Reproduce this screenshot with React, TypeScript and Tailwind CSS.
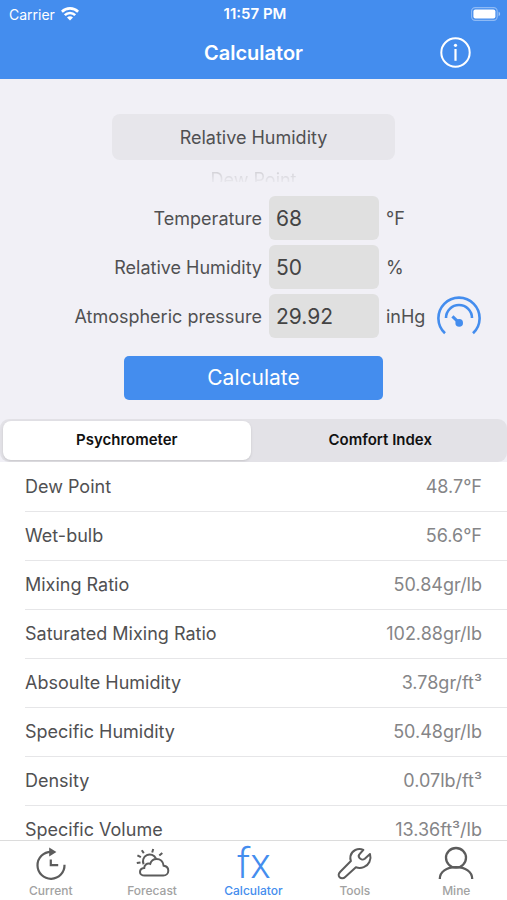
import React, { useState } from 'react';

type ResultTab = 'psychrometer' | 'comfort';

const RESULTS: { name: string; value: string }[] = [
  { name: 'Dew Point', value: '48.7°F' },
  { name: 'Wet-bulb', value: '56.6°F' },
  { name: 'Mixing Ratio', value: '50.84gr/lb' },
  { name: 'Saturated Mixing Ratio', value: '102.88gr/lb' },
  { name: 'Absoulte Humidity', value: '3.78gr/ft³' },
  { name: 'Specific Humidity', value: '50.48gr/lb' },
  { name: 'Density', value: '0.07lb/ft³' },
  { name: 'Specific Volume', value: '13.36ft³/lb' },
];

const WifiIcon = () => (
  <svg className="w-[18px] h-[14px]" viewBox="0 0 18 14" fill="none" stroke="white" strokeWidth="2.6">
    <path d="M0.9 4.7a11.6 11.6 0 0 1 16.2 0" />
    <path d="M3.8 8.1a7.4 7.4 0 0 1 10.4 0" />
    <path d="M9 13.6 6 10.6a4.2 4.2 0 0 1 6 0Z" fill="white" stroke="none" />
  </svg>
);

const BatteryIcon = () => (
  <svg className="w-[30px] h-[14px]" viewBox="0 0 30 14" fill="none">
    <rect x="0.6" y="0.6" width="25.6" height="12.8" rx="3.6" stroke="white" strokeOpacity="0.4" strokeWidth="1.1" />
    <rect x="2.4" y="2.4" width="22" height="9.2" rx="2" fill="white" />
    <path d="M27.6 4.8c2 .7 2 3.7 0 4.4Z" fill="white" fillOpacity="0.5" />
  </svg>
);

const InfoIcon = () => (
  <svg className="w-[31px] h-[31px]" viewBox="0 0 31 31" fill="none" stroke="white">
    <circle cx="15.5" cy="15.5" r="14.2" strokeWidth="2" />
    <path d="M15.5 12v11.8" strokeWidth="2.2" />
    <circle cx="15.5" cy="8.3" r="1.6" fill="white" stroke="none" />
  </svg>
);

const GaugeIcon = () => (
  <svg className="block w-11 h-11" viewBox="0 0 44 44" fill="none" stroke="#448dee" strokeWidth="2.6">
    <path d="M8 39.3A20.6 20.6 0 1 1 36 39.3" />
    <path d="M9 24a13 13 0 0 1 26 0" />
    <path d="M15.4 22.3 22 28.6" strokeWidth="3" />
    <circle cx="22.2" cy="28.9" r="3.8" fill="#448dee" stroke="none" />
  </svg>
);

const CurrentIcon = () => (
  <svg className="w-9 h-9" viewBox="0 0 36 36" fill="none" stroke="#5c5c5c" strokeWidth="2.2">
    <path d="M31.5 18.8A13.5 13.5 0 1 1 18 5.8" />
    <path d="M16.2 1.400 23.400 6 16.200 10.600Z" fill="#5c5c5c" stroke="none" />
    <path d="M17.8 13.4v5.7h7.4" />
  </svg>
);

const ForecastIcon = () => (
  <svg className="w-9 h-9" viewBox="0 0 36 36" fill="none" stroke="#5c5c5c" strokeWidth="2">
    <path d="M9.6 18.2A6.6 6.6 0 1 1 21.9 12.4" />
    <path d="M7.8 4.2l2 2.9M19.2 3l-1 3.5M28.3 7l-3 2.6M3.4 9.3l3.5 1.9M2.8 17.1l3.7-.7" />
    <path d="M10.6 29.6h18.6c3 0 5.1-2.2 5.1-4.9 0-2.7-2-4.7-4.7-5-.4-4-3.3-6.700-7-6.700-3 0-5.500 1.900-6.400 4.900-3-1.100-6 .8-6 4.100-2.300.3-4.200 1.800-4.200 3.900 0 2.100 1.900 3.700 4.600 3.700Z" />
  </svg>
);

// Formula symbol of the calculator tab
const FormulaIcon = () => (
  <span aria-hidden="true" className="h-9 leading-9 text-[42px] font-light font-[Roboto,sans-serif]">
    fx
  </span>
);

const ToolsIcon = () => (
  <svg className="w-9 h-9" viewBox="0 0 36 36" fill="none" stroke="#5c5c5c" strokeWidth="2" strokeLinejoin="round">
    <path d="M26.4 3.9C20.8 1.5 14.7 4.6 13.5 10c-.4 1.8-.2 3.5.4 5L3.3 25.7c-2 2-2.1 4.2-.7 5.6s3.8 1.5 5.6-.3L18.9 21.3c5.3 1.8 11.2-.4 13.5-5.3 1.3-2.8 1.4-5.6.6-8l-5.2 4.7c-1.7 1.3-4 .9-5.2-.5-1.1-1.3-1.1-3.2.3-4.500Z" />
  </svg>
);

const MineIcon = () => (
  <svg className="w-9 h-9" viewBox="0 0 36 36" fill="none" stroke="#5c5c5c" strokeWidth="2.3">
    <ellipse cx="18" cy="11.8" rx="10" ry="9.8" />
    <path d="M1.8 33c0-7.2 6.7-11.8 16.2-11.8S34.2 25.8 34.2 33" />
  </svg>
);

const NAV_ITEMS = [
  { label: 'Current', icon: <CurrentIcon /> },
  { label: 'Forecast', icon: <ForecastIcon /> },
  { label: 'Calculator', icon: <FormulaIcon /> },
  { label: 'Tools', icon: <ToolsIcon /> },
  { label: 'Mine', icon: <MineIcon /> },
];

interface FieldProps {
  id: string;
  label: string;
  unit: string;
  value: string;
  onChange: (value: string) => void;
  children?: React.ReactNode;
}

const Field: React.FC<FieldProps> = ({ id, label, unit, value, onChange, children }) => (
  <div className="grid grid-cols-[1fr_110px_44px_44px] items-center gap-x-[7px]">
    <label htmlFor={id} className="text-right">{label}</label>
    <input
      id={id}
      inputMode="decimal"
      value={value}
      onChange={e => onChange(e.target.value)}
      className="h-11 w-full rounded-md bg-[#e0e0e0] px-[7px] text-[21px] text-[#444] outline-none"
    />
    <span>{unit}</span>
    {children}
  </div>
);

const App: React.FC = () => {
  const [temperature, setTemperature] = useState('68');
  const [humidity, setHumidity] = useState('50');
  const [pressure, setPressure] = useState('29.92');
  const [tab, setTab] = useState<ResultTab>('psychrometer');

  return (
    <div className="h-screen flex flex-col overflow-hidden bg-[#f1f0f6] font-[Inter,sans-serif] text-[18px] text-[#505052]">
      <header className="shrink-0 bg-[#448dee] text-white">
        <div className="grid grid-cols-3 items-center h-7 pl-[9px] pr-[6px] text-[14px]">
          <div className="flex items-center gap-[6px]">
            Carrier
            <WifiIcon />
          </div>
          <div className="text-center font-semibold text-[15px]">11:57 PM</div>
          <div className="flex justify-end">
            <BatteryIcon />
          </div>
        </div>
        <div className="grid grid-cols-[1fr_auto_1fr] items-center h-[51px] px-9 pb-[2px]">
          <h1 className="col-start-2 text-[20px] font-semibold">Calculator</h1>
          <button aria-label="Info" className="justify-self-end">
            <InfoIcon />
          </button>
        </div>
      </header>

      {/* Input type wheel and fields */}
      <form className="shrink-0 pt-[35px]" onSubmit={e => e.preventDefault()}>
        <div role="listbox" aria-label="Input type" className="mx-auto w-[56%] h-[68px] overflow-hidden text-center">
          <div role="option" aria-selected="true" className="h-[46px] leading-[48px] rounded-lg bg-[#e7e6eb]">
            Relative Humidity
          </div>
          <div
            role="option"
            aria-selected="false"
            className="pt-2 leading-6 bg-linear-to-b from-[#cfced3] from-30% to-[#e9e8ee] to-70% bg-clip-text text-transparent"
          >
            Dew Point
          </div>
        </div>

        <div className="mt-[14px] pr-[26px] flex flex-col gap-[5px]">
          <Field id="temperature" label="Temperature" unit="°F" value={temperature} onChange={setTemperature} />
          <Field id="humidity" label="Relative Humidity" unit="%" value={humidity} onChange={setHumidity} />
          <Field id="pressure" label="Atmospheric pressure" unit="inHg" value={pressure} onChange={setPressure}>
            <button type="button" aria-label="Read barometer">
              <GaugeIcon />
            </button>
          </Field>
        </div>

        <button type="submit" className="block mx-auto mt-[18px] w-[51%] h-11 rounded-[5px] bg-[#448dee] text-[21px] text-white">
          Calculate
        </button>
      </form>

      <div role="tablist" className="shrink-0 mt-[19px] grid grid-cols-2 gap-[6px] h-[43px] rounded-[9px] bg-[#e3e2e7] px-[3px] py-[2px] text-[15px] font-semibold text-[#111]">
        <button
          role="tab"
          aria-selected={tab === 'psychrometer'}
          onClick={() => setTab('psychrometer')}
          className={`rounded-lg ${tab === 'psychrometer' ? 'bg-white shadow-sm' : ''}`}
        >
          Psychrometer
        </button>
        <button
          role="tab"
          aria-selected={tab === 'comfort'}
          onClick={() => setTab('comfort')}
          className={`rounded-lg ${tab === 'comfort' ? 'bg-white shadow-sm' : ''}`}
        >
          Comfort Index
        </button>
      </div>

      <div className="flex-1 min-h-0 overflow-hidden bg-white pl-[25px]">
        <table className="w-full border-collapse">
          <tbody>
            {RESULTS.map(r => (
              <tr key={r.name} className="h-[49px] border-b border-[#e6e6e8]">
                <th scope="row" className="text-left font-normal">{r.name}</th>
                <td className="pr-[25px] text-right text-[#858587]">{r.value}</td>
              </tr>
            ))}
          </tbody>
        </table>
      </div>

      <nav className="shrink-0 grid grid-cols-5 h-[60px] border-t border-[#dcdcdc] bg-white pt-[5px]">
        {NAV_ITEMS.map(item => (
          <a
            key={item.label}
            href="#"
            className={`flex flex-col items-center text-[12px] font-medium ${
              item.label === 'Calculator' ? 'text-[#448dee]' : 'text-[#a2a2a2]'
            }`}
          >
            {item.icon}
            {item.label}
          </a>
        ))}
      </nav>
    </div>
  );
};

export default App;
